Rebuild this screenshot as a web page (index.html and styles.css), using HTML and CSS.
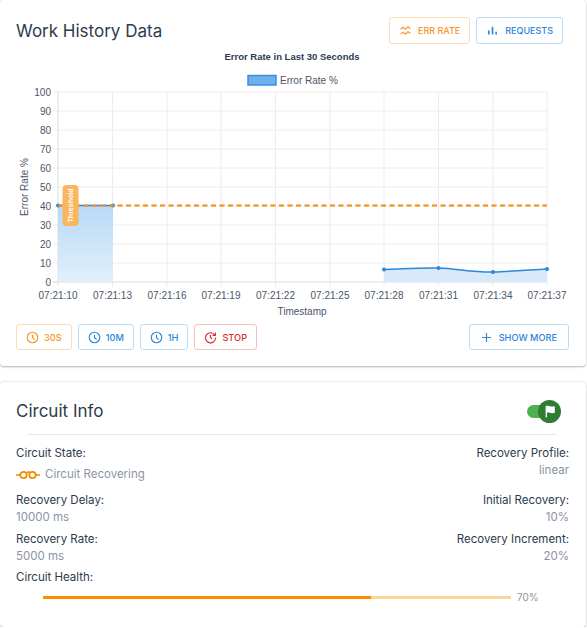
FILE: index.html
```html
<!DOCTYPE html>
<html lang="en">

<head>
    <meta charset="UTF-8">
    <meta name="viewport" content="width=device-width, initial-scale=1.0">
    <title>Work History Data</title>
    <link rel="stylesheet" href="styles.css">
</head>

<body>
    <section class="card history">
        <div class="card-head">
            <h2>Work History Data</h2>
            <div class="btn-row">
                <button class="btn orange">
                    <svg class="icon" viewBox="0 0 16 16"><path d="M2 6.500l3-2.500 3 2.500 3-3 3 2M2 12.500l3-2.500 3 2.500 3-3 3 2"/></svg>
                    ERR RATE
                </button>
                <button class="btn blue req">
                    <svg class="icon" viewBox="0 0 16 16"><path d="M3.500 13V8M8 13V3.500M12.500 13v-3.500" stroke-width="2"/></svg>
                    REQUESTS
                </button>
            </div>
        </div>

        <svg class="chart" width="587" height="276" viewBox="0 48 587 276">
            <defs>
                <linearGradient id="fill" x1="0" y1="0" x2="0" y2="1">
                    <stop offset="0" stop-color="#b9d9f5"/>
                    <stop offset="1" stop-color="#e1effb"/>
                </linearGradient>
            </defs>
            <text class="chart-title" x="292" y="60" text-anchor="middle">Error Rate in Last 30 Seconds</text>
            <rect x="248" y="75.500" width="28" height="9.500" fill="#6fb0ec" stroke="#3a8ee0" stroke-width="1.500"/>
            <text class="tick" x="280" y="84">Error Rate %</text>

            <g class="grid">
                <path d="M58 92H547M58 111H547M58 130H547M58 149H547M58 168H547M58 187H547M58 206H547M58 225H547M58 244H547M58 263H547"/>
                <path d="M112.500 92V286M167 92V286M221 92V286M275.500 92V286M330 92V286M384 92V286M438.500 92V286M493 92V286M547 92V286"/>
                <path d="M53 92H58M53 111H58M53 130H58M53 149H58M53 168H58M53 187H58M53 206H58M53 225H58M53 244H58M53 263H58M53 282H58"/>
            </g>
            <path class="axis" d="M58 92V286M53 282H547"/>

            <g class="tick" text-anchor="end">
                <text x="51" y="96">100</text>
                <text x="51" y="115">90</text>
                <text x="51" y="134">80</text>
                <text x="51" y="153">70</text>
                <text x="51" y="172">60</text>
                <text x="51" y="191">50</text>
                <text x="51" y="210">40</text>
                <text x="51" y="229">30</text>
                <text x="51" y="248">20</text>
                <text x="51" y="267">10</text>
                <text x="51" y="286">0</text>
            </g>
            <g class="tick" text-anchor="middle">
                <text x="58" y="299">07:21:10</text>
                <text x="112.500" y="299">07:21:13</text>
                <text x="167" y="299">07:21:16</text>
                <text x="221" y="299">07:21:19</text>
                <text x="275.500" y="299">07:21:22</text>
                <text x="330" y="299">07:21:25</text>
                <text x="384" y="299">07:21:28</text>
                <text x="438.500" y="299">07:21:31</text>
                <text x="493" y="299">07:21:34</text>
                <text x="547" y="299">07:21:37</text>
            </g>
            <text class="tick" x="302" y="315" text-anchor="middle">Timestamp</text>
            <text class="tick" transform="translate(28 187) rotate(-90)" text-anchor="middle">Error Rate %</text>

            <path d="M58 205.500H113V282H58Z" fill="url(#fill)"/>
            <path d="M384 269.500C402 269 420 267.500 438.500 268C456 268.500 474 272.500 493 272C511 271.500 529 270 547 269V282H384Z" fill="#d8e9fa"/>
            <path class="series" d="M58 205.500H113"/>
            <path class="series" d="M384 269.500C402 269 420 267.500 438.500 268C456 268.500 474 272.500 493 272C511 271.500 529 270 547 269"/>
            <g fill="#2b86dc">
                <circle cx="58" cy="205.500" r="2"/>
                <circle cx="113" cy="205.500" r="2"/>
                <circle cx="384" cy="269.500" r="2"/>
                <circle cx="438.500" cy="268" r="2"/>
                <circle cx="493" cy="272" r="2"/>
                <circle cx="547" cy="269" r="2"/>
            </g>
            <path class="threshold" d="M58 205.500H547"/>
            <rect x="62.500" y="185" width="16" height="41" rx="4" fill="#f9b65f"/>
            <text class="flag-text" transform="translate(73 205.500) rotate(-90)" text-anchor="middle">Threshold</text>
        </svg>

        <div class="card-foot">
            <div class="btn-row">
                <button class="btn orange">
                    <svg class="icon clock" viewBox="0 0 16 16"><circle cx="8" cy="8" r="6.500"/><path d="M8 4.500V8l2.500 2.500"/></svg>
                    30S
                </button>
                <button class="btn blue">
                    <svg class="icon clock" viewBox="0 0 16 16"><circle cx="8" cy="8" r="6.500"/><path d="M8 4.500V8l2.500 2.500"/></svg>
                    10M
                </button>
                <button class="btn blue">
                    <svg class="icon clock" viewBox="0 0 16 16"><circle cx="8" cy="8" r="6.500"/><path d="M8 4.500V8l2.500 2.500"/></svg>
                    1H
                </button>
                <button class="btn red">
                    <svg class="icon clock" viewBox="0 0 16 16"><path d="M13.200 5A6.200 6.200 0 1 0 14.200 8"/><path d="M14 1.800v3.500h-3.500"/><path d="M8 5V8l2 1.500"/></svg>
                    STOP
                </button>
            </div>
            <button class="btn blue more">
                <svg class="icon clock" viewBox="0 0 16 16"><path d="M8 2.500v11M2.500 8h11"/></svg>
                SHOW MORE
            </button>
        </div>
    </section>

    <section class="card circuit">
        <div class="circuit-head">
            <h2>Circuit Info</h2>
            <div class="toggle">
                <span class="track"></span>
                <span class="knob">
                    <svg viewBox="0 0 16 16" width="14" height="14"><path d="M3 15V2.500C6 1 9 4 13.500 2.500V10C9 11.500 6.500 9 4.500 10V15Z" fill="#fff"/></svg>
                </span>
            </div>
        </div>

        <div class="info-grid">
            <div class="field">
                <div class="label">Circuit State:</div>
                <div class="value state">
                    <svg viewBox="0 0 24 10" width="24" height="10"><path d="M0 5h4M20 5h4M10.500 3l3 -1.500" stroke="#f28c00" stroke-width="1.500" fill="none"/><circle cx="7.500" cy="5" r="3.200" fill="none" stroke="#f28c00" stroke-width="1.800"/><circle cx="16.500" cy="5" r="3.200" fill="none" stroke="#f28c00" stroke-width="1.800"/></svg>
                    Circuit Recovering
                </div>
            </div>
            <div class="field right">
                <div class="label">Recovery Profile:</div>
                <div class="value">linear</div>
            </div>
            <div class="field">
                <div class="label">Recovery Delay:</div>
                <div class="value">10000 ms</div>
            </div>
            <div class="field right">
                <div class="label">Initial Recovery:</div>
                <div class="value">10%</div>
            </div>
            <div class="field">
                <div class="label">Recovery Rate:</div>
                <div class="value">5000 ms</div>
            </div>
            <div class="field right">
                <div class="label">Recovery Increment:</div>
                <div class="value">20%</div>
            </div>
        </div>

        <div class="label health-label">Circuit Health:</div>
        <div class="health">
            <div class="bar"><div class="bar-fill" style="width: 70%"></div></div>
            <span class="pct">70%</span>
        </div>
    </section>
</body>

</html>
```

FILE: styles.css
```css
body {
    font-family: Inter, "Noto Sans", sans-serif;
    margin: 0;
    padding: 0;
    background-color: #fff;
    color: #2d3b4e;
}

.card {
    width: 586px;
    box-sizing: border-box;
    background-color: #fff;
    border-radius: 4px;
    box-shadow: 0 1px 2px rgba(0, 0, 0, 0.3), 0 -1px 2px rgba(0, 0, 0, 0.08);
}

h2 {
    margin: 0;
    font-size: 17px;
    font-weight: 400;
    line-height: 24px;
}

.history {
    height: 366px;
    padding: 17px 17px 0 16px;
}

.card-head {
    display: flex;
    justify-content: space-between;
    align-items: center;
    height: 27px;
    padding-right: 6px;
}

.btn-row {
    display: flex;
    gap: 6px;
}

.btn {
    display: flex;
    align-items: center;
    gap: 6px;
    height: 27px;
    padding: 0 9px;
    box-sizing: border-box;
    background-color: #fff;
    border: 1px solid;
    border-radius: 3px;
    font-family: inherit;
    font-size: 9px;
    font-weight: 500;
}

.orange {
    color: #f7941d;
    border-color: #fbdcb4;
}

.blue {
    color: #2b86dc;
    border-color: #bcdcf6;
}

.red {
    color: #d32f2f;
    border-color: #f2c1c1;
}

.icon {
    width: 13px;
    height: 13px;
    fill: none;
    stroke: currentColor;
    stroke-width: 1.400;
}

.chart {
    display: block;
    margin: 4px 0 0 -16px;
}

.chart-title {
    font: bold 9.500px "Liberation Sans", sans-serif;
    fill: #2d3b4e;
}

.tick,
.tick text {
    font: 10px "Liberation Sans", sans-serif;
    fill: #4a5666;
}

.grid path {
    fill: none;
    stroke: #ececec;
    stroke-width: 1;
}

.axis {
    fill: none;
    stroke: #dcdcdc;
    stroke-width: 1;
}

.series {
    fill: none;
    stroke: #2b86dc;
    stroke-width: 1.500;
}

.threshold {
    fill: none;
    stroke: #f7890c;
    stroke-width: 2;
    stroke-dasharray: 5 3.500;
}

.flag-text {
    font: bold 7px "Liberation Sans", sans-serif;
    fill: #fff;
}

.card-foot {
    display: flex;
    justify-content: space-between;
    align-items: center;
}

.card-foot .btn {
    height: 26px;
    gap: 5px;
    font-size: 9.200px;
}

.card-foot .more {
    gap: 6px;
    padding: 0 11px 0 10px;
}

.circuit {
    height: 245px;
    margin-top: 16px;
    padding: 16px 17px 0 16px;
}

.circuit-head {
    display: flex;
    justify-content: space-between;
    align-items: center;
    height: 26px;
    padding-right: 8px;
    padding-bottom: 11px;
    position: relative;
}

.circuit-head::after {
    content: "";
    position: absolute;
    left: 11px;
    right: 12px;
    bottom: 0;
    border-bottom: 1px solid #e6e8eb;
}

.toggle {
    display: flex;
    align-items: center;
}

.track {
    width: 23px;
    height: 13px;
    background-color: #4caf50;
    border-radius: 7px;
}

.knob {
    display: flex;
    align-items: center;
    justify-content: center;
    width: 23px;
    height: 23px;
    margin-left: -12px;
    background-color: #2e7d32;
    border-radius: 50%;
}

.info-grid {
    display: grid;
    grid-template-columns: 1fr 1fr;
    row-gap: 5px;
    margin-top: 10px;
}

.field.right {
    text-align: right;
}

.label {
    font-size: 11.500px;
    line-height: 17px;
    color: #2d3b4e;
}

.value {
    font-size: 11.500px;
    line-height: 17px;
    color: #8a94a3;
}

.state {
    display: flex;
    align-items: center;
    gap: 5px;
    margin: 4px 0 4px;
}

.health-label {
    margin-top: 4px;
}

.health {
    display: flex;
    align-items: center;
    gap: 6px;
    margin: 4px 0 0 27px;
    height: 14px;
}

.bar {
    width: 468px;
    height: 3px;
    background-color: #fdd49a;
}

.bar-fill {
    height: 100%;
    background-color: #fb8c00;
}

.pct {
    font-size: 10px;
    color: #8a94a3;
}
```
